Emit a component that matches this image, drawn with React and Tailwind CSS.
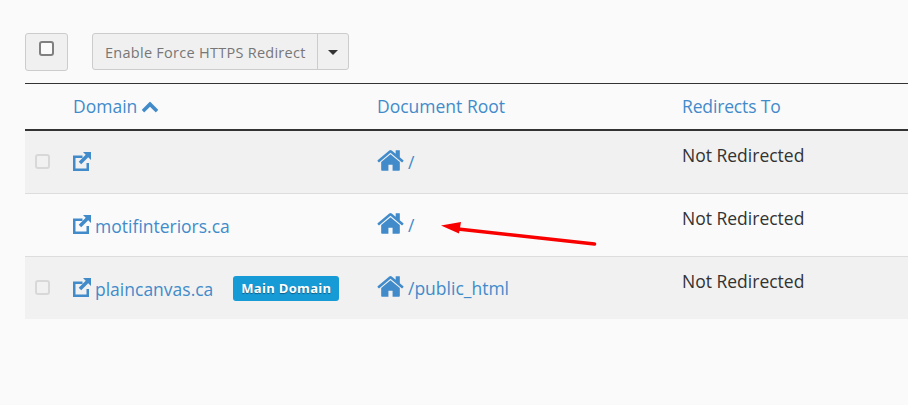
const HOME = "M1472 992v480q0 26-19 45t-45 19h-384v-384h-256v384h-384q-26 0-45-19t-19-45v-480q0-1 .5-3t.5-3l575-474 575 474q1 2 1 6zm223-69l-62 74q-8 9-21 11h-3q-13 0-21-7l-692-577-692 577q-12 8-24 7-13-2-21-11l-62-74q-8-10-7-23.500t11-21.500l719-599q32-26 76-26t76 26l244 204v-195q0-14 9-23t23-9h192q14 0 23 9t9 23v408l219 182q10 8 11 21.500t-7 23.500z";
const CHEV = "M1683 1331l-166 165q-19 19-45 19t-45-19l-531-531-531 531q-19 19-45 19t-45-19l-166-165q-19-19-19-45.500t19-45.500l742-741q19-19 45-19t45 19l742 741q19 19 19 45.500t-19 45.500z";

function HomeIcon() {
  return (
    <svg viewBox="0 0 1792 1792" className="w-[29px] h-[29px] -ml-[1px] shrink-0 fill-[#428bca]">
      <path d={HOME} />
    </svg>
  );
}

function LinkIcon() {
  return (
    <svg viewBox="0 0 18 19" className="w-[18px] h-[19px] shrink-0 fill-[#428bca]">
      <path d="M0 3.500h9.500V6H2.500v10.500h11V11H16v8H0z" />
      <path d="M10 0h8v8l-2.800-2.800-7 7-2.500-2.500 7-7z" />
    </svg>
  );
}

function Box() {
  return <span className="block w-[15px] h-[15px] rounded-[3px] border-2 border-[#d8d8d8] bg-[#f1f1f1]" />;
}

function Row({ checkbox = true, shaded, last, name, badge, root }) {
  return (
    <div className={`flex ${last ? "h-[62px]" : "h-[63px] border-b border-[#dddddd]"} ${shaded ? "bg-[#f1f1f1]" : "bg-[#fafafa]"}`}>
      <div className="w-[48px] pl-[10px] pt-[23px]">{checkbox && <Box />}</div>
      <div className="w-[304px] flex items-start pt-[21px] h-full">
        <LinkIcon />
        {name && <span className="ml-[4px] -mt-[1px] text-[17.500px] leading-[24px] text-[#428bca]">{name}</span>}
        {badge && (
          <span className="ml-[20px] -mt-[2px] w-[106px] h-[25px] rounded-[3px] bg-[#179bd7] text-white text-[13px] font-bold leading-[25px] text-center tracking-[0.3px] [text-shadow:0_1px_1px_rgba(0,0,0,0.4)]">
            {badge}
          </span>
        )}
      </div>
      <div className="w-[305px] flex items-start pt-[15px]">
        <HomeIcon />
        <span className="ml-[3px] mt-[4px] text-[17.500px] leading-[24px] text-[#428bca]">{root}</span>
      </div>
      <div className="flex-1 pt-[12px] text-[17.500px] leading-[24px] text-[#333333]">Not Redirected</div>
    </div>
  );
}

export default function App() {
  return (
    <div className="relative w-[908px] h-[405px] overflow-hidden bg-[#fafafa] font-['Open_Sans',sans-serif]">
      <div className="pl-[25px] pt-[33px]">
        <div className="flex items-start h-[50px]">
          <div className="w-[43px] h-[38px] rounded-[3px] border border-[#cccccc] bg-[#f0f0f0] flex justify-center pt-[7px]">
            <span className="block w-[15px] h-[15px] rounded-[3px] border-2 border-[#808080] bg-[#fafafa]" />
          </div>
          <div className="ml-[24px] flex h-[37px] w-[257px] rounded-[3px] border border-[#cccccc] bg-[#f0f0f0]">
            <div className="flex-1 pl-[12px] text-[14.500px] leading-[37px] tracking-[0.27px] text-[#777777]">Enable Force HTTPS Redirect</div>
            <div className="w-[31px] border-l border-[#cccccc] flex items-center justify-center pt-[1px]">
              <span className="block w-0 h-0 border-x-[5px] border-x-transparent border-t-[5px] border-t-[#333333]" />
            </div>
          </div>
        </div>
        <div className="flex h-[48px] border-t border-b-2 border-t-[#333333] border-b-[#333333] text-[#428bca] text-[17.500px] leading-[45px]">
          <div className="w-[48px]" />
          <div className="w-[304px] flex items-center -mt-[1px]">
            Domain
            <svg viewBox="0 0 1792 1792" className="ml-[4px] w-[18px] h-[18px] fill-[#428bca]"><path d={CHEV} /></svg>
          </div>
          <div className="w-[305px]">Document Root</div>
          <div className="flex-1 tracking-[-0.15px]">Redirects To</div>
        </div>
        <Row shaded root="/" />
        <Row checkbox={false} name="motifinteriors.ca" root="/" />
        <Row shaded last name="plaincanvas.ca" badge="Main Domain" root="/public_html" />
      </div>
      <svg className="absolute left-[435px] top-[215px] w-[170px] h-[40px]" viewBox="435 215 170 40">
        <path d="M594.500 244 L458 229" stroke="#f90000" strokeWidth="3.500" strokeLinecap="round" fill="none" />
        <path d="M441 225.500 L461 222 L459 233.500 Z" fill="#f90000" />
      </svg>
    </div>
  );
}
